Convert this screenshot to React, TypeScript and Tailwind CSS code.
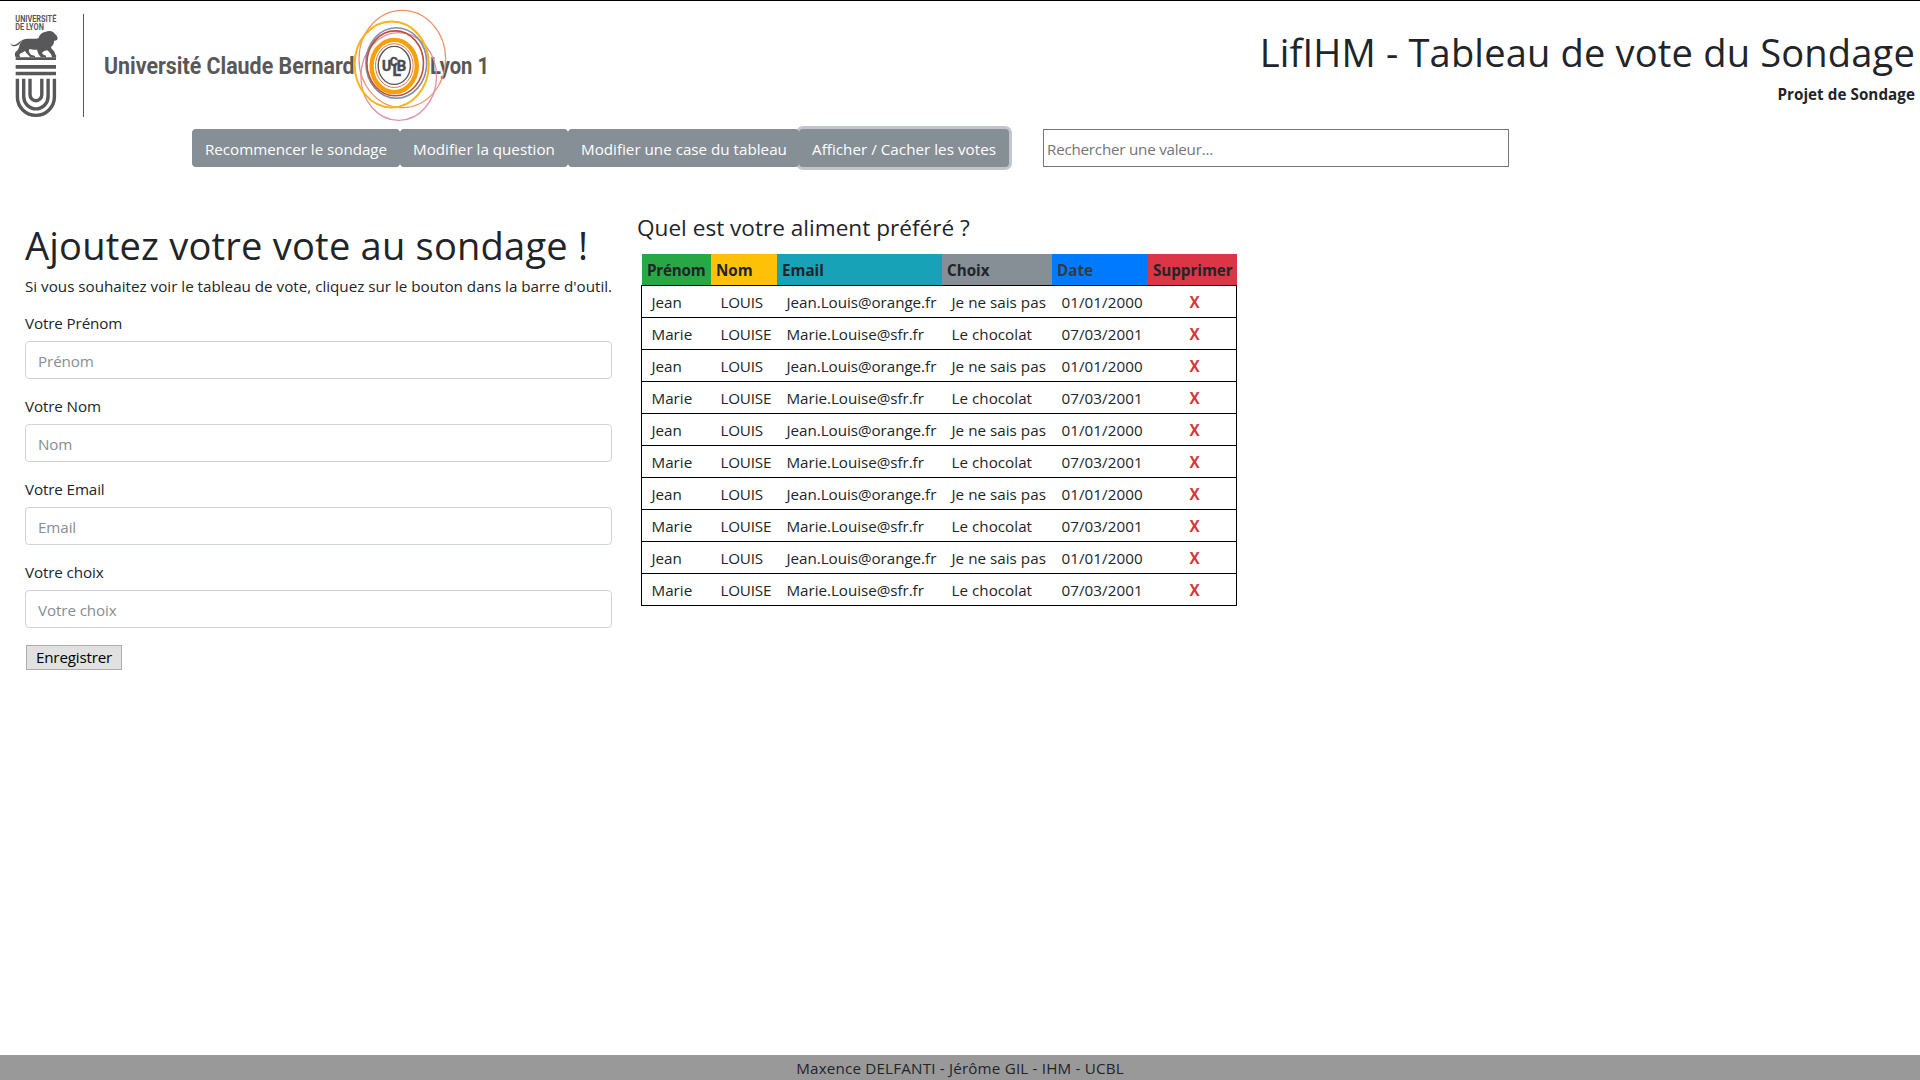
const navItems = [
  { label: "Recommencer le sondage", box: "w-[208px]", text: "tracking-[-0.03px]" },
  { label: "Modifier la question", box: "w-[168px]", text: "" },
  { label: "Modifier une case du tableau", box: "w-[231px]", text: "" },
  {
    label: "Afficher / Cacher les votes",
    box: "w-[210px] shadow-[0_0_0_3px_rgba(134,142,150,0.5)]",
    text: "tracking-[0.03px]",
  },
];

const fields = [
  { label: "Votre Prénom", placeholder: "Prénom" },
  { label: "Votre Nom", placeholder: "Nom" },
  { label: "Votre Email", placeholder: "Email" },
  { label: "Votre choix", placeholder: "Votre choix" },
];

const headers = [
  { label: "Prénom", style: "w-[69px] bg-[#28a745] tracking-[-0.2px]" },
  { label: "Nom", style: "w-[66px] bg-[#ffc107]" },
  { label: "Email", style: "w-[165px] bg-[#17a2b8]" },
  { label: "Choix", style: "w-[110px] bg-[#868e96]" },
  { label: "Date", style: "w-[96px] bg-[#007bff] text-[#343a40]" },
  { label: "Supprimer", style: "w-[89px] bg-[#dc3545] tracking-[-0.03px]" },
];

const pair = [
  ["Jean", "LOUIS", "Jean.Louis@orange.fr", "Je ne sais pas", "01/01/2000"],
  ["Marie", "LOUISE", "Marie.Louise@sfr.fr", "Le chocolat", "07/03/2001"],
];
const votes = [...pair, ...pair, ...pair, ...pair, ...pair];

const cellStyles = [
  "w-[69px]",
  "w-[66px] tracking-[-0.2px]",
  "w-[165px] tracking-[-0.04px]",
  "w-[110px] tracking-[0.03px]",
  "w-[96px] tracking-[0.06px]",
];

function Logo() {
  return (
    <svg width="500" height="128" viewBox="0 0 500 128" className="block" fill="none">
      <g fill="#58585a" fontFamily="Roboto, sans-serif">
        <text x="15.3" y="22.3" fontSize="9.6" fontWeight="700" textLength="41" lengthAdjust="spacingAndGlyphs">UNIVERSITÉ</text>
        <text x="15.3" y="30.4" fontSize="9.4" fontWeight="700" textLength="28.6" lengthAdjust="spacingAndGlyphs">DE LYON</text>
        <text x="104" y="73.6" fontSize="23.6" fontWeight="700" textLength="250.6" lengthAdjust="spacingAndGlyphs">Université Claude Bernard</text>
      </g>
      <g transform="scale(0.33333)" fill="#58585a">
        <path d="M31 128 C34 136 44 137 53 130 C62 122 72 116 84 116 C96 117 108 117 116 114 C118 104 127 96 138 95 C145 91 157 93 162 98 C163 101 168 103 170 107 L173 114 C173 120 168 123 162 122 C163 129 159 136 153 141 C154 146 158 150 162 153 C165 157 164 162 169 167 L168 172 L156 172 C155 163 149 157 142 151 C136 151 130 154 126 159 C128 164 133 166 138 167 L138 172 L123 172 C120 167 114 162 113 155 L111 149 C102 150 94 148 88 147 C85 153 87 158 93 164 L105 168 L105 172 L91 172 C86 166 79 160 75 153 C69 157 61 159 58 164 L61 172 L48 172 C43 166 43 157 51 152 C58 145 57 137 60 131 C62 127 66 123 69 122 C62 124 59 132 53 136 C42 142 32 138 31 128Z" />
        <path d="M47 172h121v8H47zM47 195h121v11H47zM47 215h121v11H47z" />
      </g>
      <g stroke="#58585a" strokeWidth="3.4">
        <path d="M17.4 78.7V97a18.5 18.4 0 0 0 37 0V78.7" />
        <path d="M23.7 78.7V96.5a12.2 12.4 0 0 0 24.4 0V78.7" />
        <path d="M30 78.7V94.5a5.9 6.2 0 0 0 11.8 0V78.7" />
      </g>
      <path d="M83.5 14V117" stroke="#58585a" strokeWidth="1" />
      <text x="430" y="73.6" fill="#58585a" fontFamily="Roboto, sans-serif" fontSize="23.6" fontWeight="700" textLength="59" lengthAdjust="spacingAndGlyphs">Lyon 1</text>
      <ellipse cx="402.3" cy="59" rx="43.3" ry="48.6" stroke="#ec9468" strokeWidth="1.2" />
      <ellipse cx="398.7" cy="76.5" rx="37.8" ry="43.8" stroke="#e08fae" strokeWidth="1.3" />
      <ellipse cx="391.7" cy="64.4" rx="37.1" ry="43" stroke="#f9b415" strokeWidth="2" />
      <ellipse cx="396.3" cy="63" rx="30.4" ry="35.2" stroke="#7f8fae" strokeWidth="1.6" />
      <ellipse cx="395.2" cy="63.3" rx="28.3" ry="32.4" stroke="#bf5138" strokeWidth="1.6" />
      <ellipse cx="394.2" cy="66" rx="22.6" ry="26.2" stroke="#f7a008" strokeWidth="4.3" />
      <ellipse cx="394.3" cy="65.6" rx="18.8" ry="21.9" stroke="#e8734a" strokeWidth="1" />
      <ellipse cx="394.3" cy="65.4" rx="16.1" ry="19" stroke="#58585a" strokeWidth="1.4" />
      <g fill="#4c4c4e" stroke="#4c4c4e" strokeWidth="0.5" fontFamily="Roboto, sans-serif" fontWeight="700">
        <text x="382" y="71" fontSize="14.5" textLength="9.2" lengthAdjust="spacingAndGlyphs">U</text>
        <text x="389.8" y="65.6" fontSize="13.5" textLength="8" lengthAdjust="spacingAndGlyphs">C</text>
        <text x="392.4" y="76.4" fontSize="17" textLength="8.5" lengthAdjust="spacingAndGlyphs">L</text>
        <text x="396.8" y="71" fontSize="14.5" textLength="9.5" lengthAdjust="spacingAndGlyphs">B</text>
      </g>
    </svg>
  );
}

export default function App() {
  return (
    <div className="flex h-[1080px] w-[1920px] flex-col overflow-hidden bg-white font-['Open_Sans','Noto_Sans',sans-serif] text-[15.2px] leading-6 text-[#212529]">
      <header className="flex h-[128px] justify-between border-t border-black">
        <div className="-mt-px">
          <Logo />
        </div>
        <div className="pr-[5px] pt-[27px] text-right">
          <h1 className="text-[38.1px] leading-[48px] tracking-[0.16px]">LifIHM - Tableau de vote du Sondage</h1>
          <p className="mt-[6px] font-bold tracking-[0.06px]">Projet de Sondage</p>
        </div>
      </header>

      <nav className="mt-px flex h-[38px] pl-[192px]">
        {navItems.map((item) => (
          <button key={item.label} className={`rounded bg-[#868e96] pt-[2px] pl-[13px] text-left whitespace-nowrap text-white ${item.box} ${item.text}`}>
            {item.label}
          </button>
        ))}
        <input
          className="ml-[34px] w-[466px] border border-[#767676] px-[3px] pt-[2px] tracking-[-0.23px] placeholder:text-[#757575]"
          placeholder="Rechercher une valeur..."
        />
      </nav>

      <main className="flex flex-1 items-start">
        <section className="ml-[25px] w-[587px] pt-[54px]">
          <h1 className="text-[38.1px] leading-[48px] tracking-[0.2px] whitespace-nowrap">Ajoutez votre vote au sondage !</h1>
          <p className="mt-[5px] whitespace-nowrap">Si vous souhaitez voir le tableau de vote, cliquez sur le bouton dans la barre d'outil.</p>
          <form className="mt-[13px] flex flex-col gap-[15px]">
            {fields.map((field) => (
              <label key={field.label} className="flex flex-col gap-[6px] tracking-[-0.12px]">
                {field.label}
                <input
                  className="h-[38px] w-full rounded border border-[#ced4da] px-3 pt-[2px] tracking-[-0.1px] placeholder:text-[#868e96]"
                  placeholder={field.placeholder}
                />
              </label>
            ))}
          </form>
          <button className="mt-[17px] ml-px h-[25px] w-[96px] border border-[#adadad] bg-[#e1e1e1] leading-[23px] tracking-[-0.2px] text-black">
            Enregistrer
          </button>
        </section>

        <section className="ml-[25px] pt-[44px]">
          <h2 className="text-[22.6px] leading-[34px]">Quel est votre aliment préféré ?</h2>
          <div className="mt-[9px] ml-1 w-[596px]">
            <div className="flex h-[31px] pl-px font-bold leading-[33px]">
              {headers.map((header) => (
                <div key={header.label} className={`pl-[5px] whitespace-nowrap ${header.style}`}>
                  {header.label}
                </div>
              ))}
            </div>
            <div className="border border-b-0 border-black">
              {votes.map((vote, row) => (
                <div key={row} className="flex h-8 border-b border-black leading-[33px]">
                  {vote.map((value, column) => (
                    <div key={column} className={`pl-[9.5px] whitespace-nowrap ${cellStyles[column]}`}>
                      {value}
                    </div>
                  ))}
                  <div className="flex-1 pl-[5px] text-center font-bold text-[#d43a3a]">X</div>
                </div>
              ))}
            </div>
          </div>
        </section>
      </main>

      <footer className="h-[25px] bg-[#999999] text-center leading-[26px] tracking-[0.18px]">
        Maxence DELFANTI - Jérôme GIL - IHM - UCBL
      </footer>
    </div>
  );
}
